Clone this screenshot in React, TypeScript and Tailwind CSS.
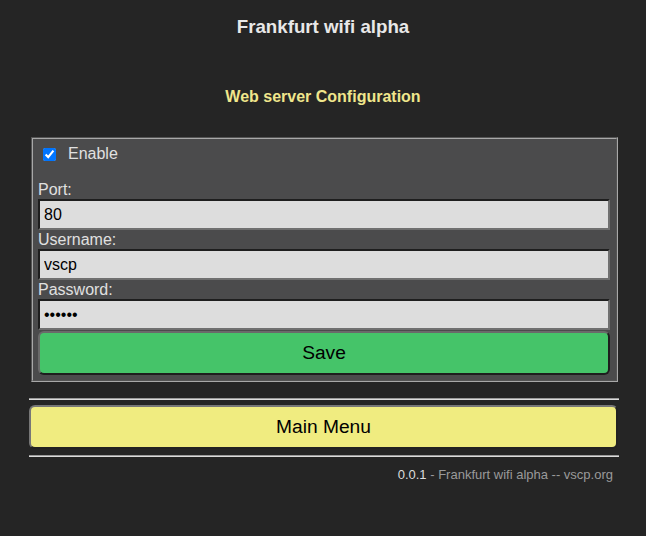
import { useState } from "react";

const fieldLabel = "block text-[16px] leading-[19px] text-[#e0e0e0]";
const fieldInput =
  "block h-[31px] w-[572px] border-2 border-solid border-t-[#1e1e1e] border-l-[#1e1e1e] border-b-[#707070] border-r-[#707070] bg-[#dddddd] px-[4px] text-[16px] text-black outline-none";

export default function App() {
  const [enabled, setEnabled] = useState(true);
  const [port, setPort] = useState("80");
  const [user, setUser] = useState("vscp");
  const [pass, setPass] = useState("secret");

  return (
    <div className="min-h-[536px] bg-[#252525] font-['Liberation_Sans',Arial,sans-serif]">
      <div className="ml-[29px] w-[588px] pt-[16px]">
        <h3 className="text-center text-[18.72px] font-bold leading-[22px] text-[#e8e8e8]">
          Frankfurt wifi alpha
        </h3>
        <h4 className="mt-[50px] text-center text-[16px] font-bold leading-[18px] text-[#f0e68c]">
          Web server Configuration
        </h4>

        {/* Config form */}
        <fieldset className="ml-[2px] mt-[31px] w-[587px] border-2 border-[#a8a8a8] bg-[#4b4b4c] pb-[5px] pl-[5px] pr-[6px] pt-[6px] [border-style:groove]">
          <label className="flex h-[18px] items-center text-[16px] text-[#e0e0e0]">
            <input
              type="checkbox"
              checked={enabled}
              onChange={(e) => setEnabled(e.target.checked)}
              className="ml-[5px] mr-[12px] h-[13px] w-[13px] accent-[#0075ff]"
            />
            Enable
          </label>

          <div className="mt-[17px]">
            <label className={fieldLabel}>Port:</label>
            <input className={fieldInput} value={port} onChange={(e) => setPort(e.target.value)} />
            <label className={fieldLabel}>Username:</label>
            <input className={fieldInput} value={user} onChange={(e) => setUser(e.target.value)} />
            <label className={fieldLabel}>Password:</label>
            <input
              type="password"
              className={fieldInput}
              value={pass.slice(0, 6)}
              onChange={(e) => setPass(e.target.value)}
            />
            <button
              type="button"
              className="mt-[1px] block h-[44px] w-[572px] rounded-[6px] border-2 border-solid border-t-[#6a6a6a] border-l-[#6a6a6a] border-b-[#1e1e1e] border-r-[#1e1e1e] bg-[#45c469] text-[19.2px] text-black"
            >
              Save
            </button>
          </div>
        </fieldset>

        <hr className="mt-[16px] h-0 w-[590px] border-0 border-t border-b border-t-[#9a9a9a] border-b-[#dcdcdc]" />
        <button
          type="button"
          className="mt-[5px] block h-[44px] w-[589px] rounded-[6px] border-2 border-solid border-t-[#777777] border-l-[#777777] border-b-[#222222] border-r-[#222222] bg-[#f0ec80] text-[19.2px] text-black"
        >
          Main Menu
        </button>
        <hr className="mt-[6px] h-0 w-[590px] border-0 border-t border-b border-t-[#9a9a9a] border-b-[#dcdcdc]" />

        <p className="mt-[10px] pr-[4px] text-right text-[13px] leading-[15px] text-[#9a9a9a]">
          <span className="text-[#dddddd]">0.0.1</span> - Frankfurt wifi alpha -- vscp.org
        </p>
      </div>
    </div>
  );
}
